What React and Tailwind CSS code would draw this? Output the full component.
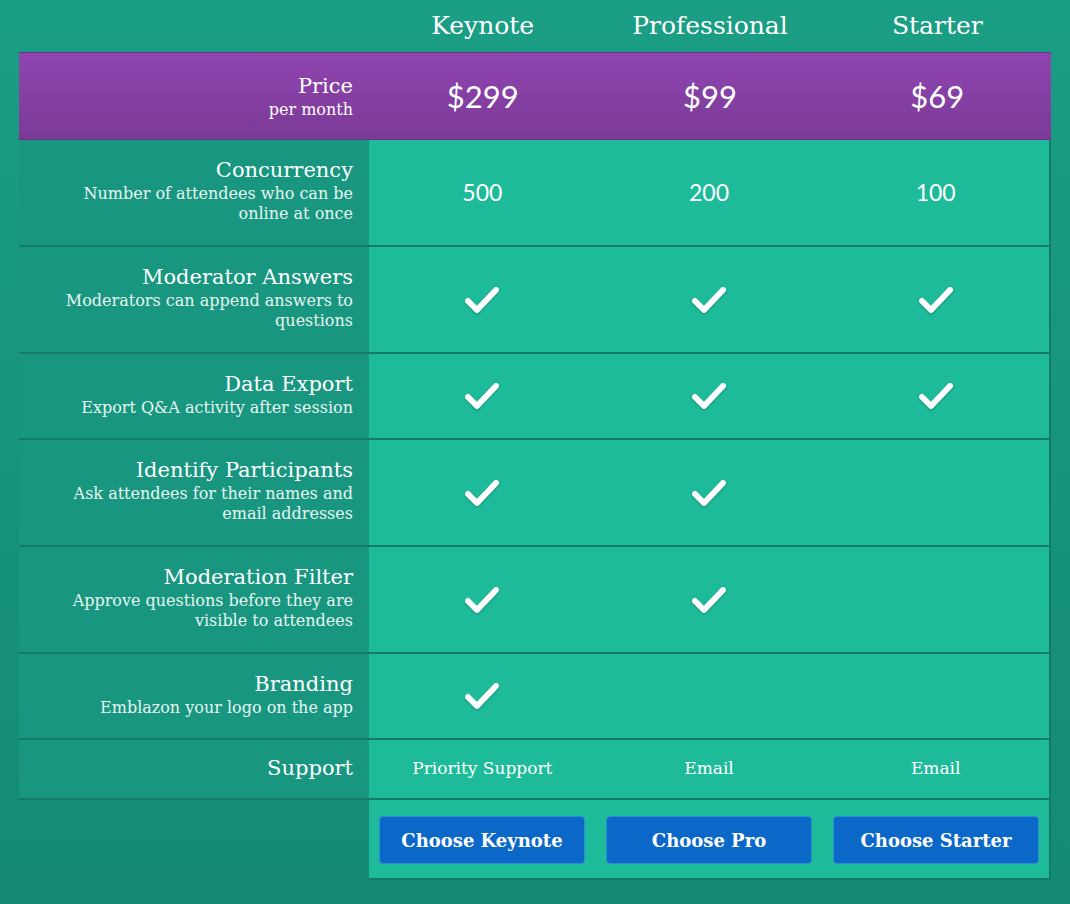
import React from 'react';

const slab = { fontFamily: '"DejaVu Serif", "Liberation Serif", serif' };

const rows = [
  { t: 'Concurrency', d: ['Number of attendees who can be', 'online at once'], v: ['500', '200', '100'], h: 'h-[107px]' },
  { t: 'Moderator Answers', d: ['Moderators can append answers to', 'questions'], v: [1, 1, 1], h: 'h-[107px]' },
  { t: 'Data Export', d: ['Export Q&A activity after session'], v: [1, 1, 1], h: 'h-[86px]' },
  { t: 'Identify Participants', d: ['Ask attendees for their names and', 'email addresses'], v: [1, 1, 0], h: 'h-[107px]' },
  { t: 'Moderation Filter', d: ['Approve questions before they are', 'visible to attendees'], v: [1, 1, 0], h: 'h-[107px]' },
  { t: 'Branding', d: ['Emblazon your logo on the app'], v: [1, 0, 0], h: 'h-[86px]' },
];

const Check = () => (
  <svg width="34" height="28" viewBox="0 0 34 28" className="drop-shadow-[0_1px_1px_rgba(0,0,0,0.25)]">
    <path d="M3 15 L12 24 L31 4" fill="none" stroke="white" strokeWidth="6" strokeLinecap="round" strokeLinejoin="round" />
  </svg>
);

export default function App() {
  return (
    <div className="w-[1070px] h-[904px] bg-gradient-to-b from-[#1a9e84] to-[#148a73] pt-0 px-[19px] text-white" style={slab}>
      <div className="grid grid-cols-[350px_1fr_1fr_1fr] h-[52px] items-center text-[25px]">
        <div />
        <div className="text-center">Keynote</div>
        <div className="text-center">Professional</div>
        <div className="text-center">Starter</div>
      </div>
      <div className="grid grid-cols-[350px_1fr_1fr_1fr] h-[88px] bg-gradient-to-b from-[#9045b0] to-[#7b3a97] border-y border-[#6b2f86] items-center">
        <div className="text-right pr-4">
          <div className="text-[21px] leading-7">Price</div>
          <div className="text-[16px] leading-5">per month</div>
        </div>
        {['$299', '$99', '$69'].map(p => (
          <div key={p} className="text-center text-[31px]" style={{ fontFamily: 'Lato, "Open Sans", sans-serif' }}>{p}</div>
        ))}
      </div>
      {rows.map(r => (
        <div key={r.t} className={`grid grid-cols-[350px_1fr] ${r.h} border-b-2 border-[#157a66]`}>
          <div className="text-right pr-4 pt-[16px] bg-[#189680]">
            <div className="text-[21px] leading-7">{r.t}</div>
            {r.d.map(x => <div key={x} className="text-[16px] leading-5 text-[#e6f6f1]">{x}</div>)}
          </div>
          <div className="grid grid-cols-3 items-center bg-[#1dbb9a] border-r-2 border-[#157a66]">
            {r.v.map((v, i) => (
              <div key={i} className="flex justify-center text-[23px]" style={{ fontFamily: 'Lato, "Open Sans", sans-serif' }}>
                {v === 1 ? <Check /> : v === 0 ? null : v}
              </div>
            ))}
          </div>
        </div>
      ))}
      <div className="grid grid-cols-[350px_1fr] h-[60px] border-b-2 border-[#157a66]">
        <div className="text-right pr-4 flex items-center justify-end bg-[#189680] text-[21px]">Support</div>
        <div className="grid grid-cols-3 items-center bg-[#1dbb9a] border-r-2 border-[#157a66] text-[17px] text-center">
          <div>Priority Support</div><div>Email</div><div>Email</div>
        </div>
      </div>
      <div className="grid grid-cols-[350px_1fr] h-[80px]">
        <div />
        <div className="grid grid-cols-3 gap-[21px] px-[10px] pt-[16px] pb-[14px] bg-[#1dbb9a] border-r-2 border-b-2 border-[#157a66]">
          {['Choose Keynote', 'Choose Pro', 'Choose Starter'].map(b => (
            <button key={b} className="bg-[#0b68c9] rounded-[4px] font-bold text-[18px] border border-[#2a8fd0] h-[48px]">{b}</button>
          ))}
        </div>
      </div>
    </div>
  );
}
